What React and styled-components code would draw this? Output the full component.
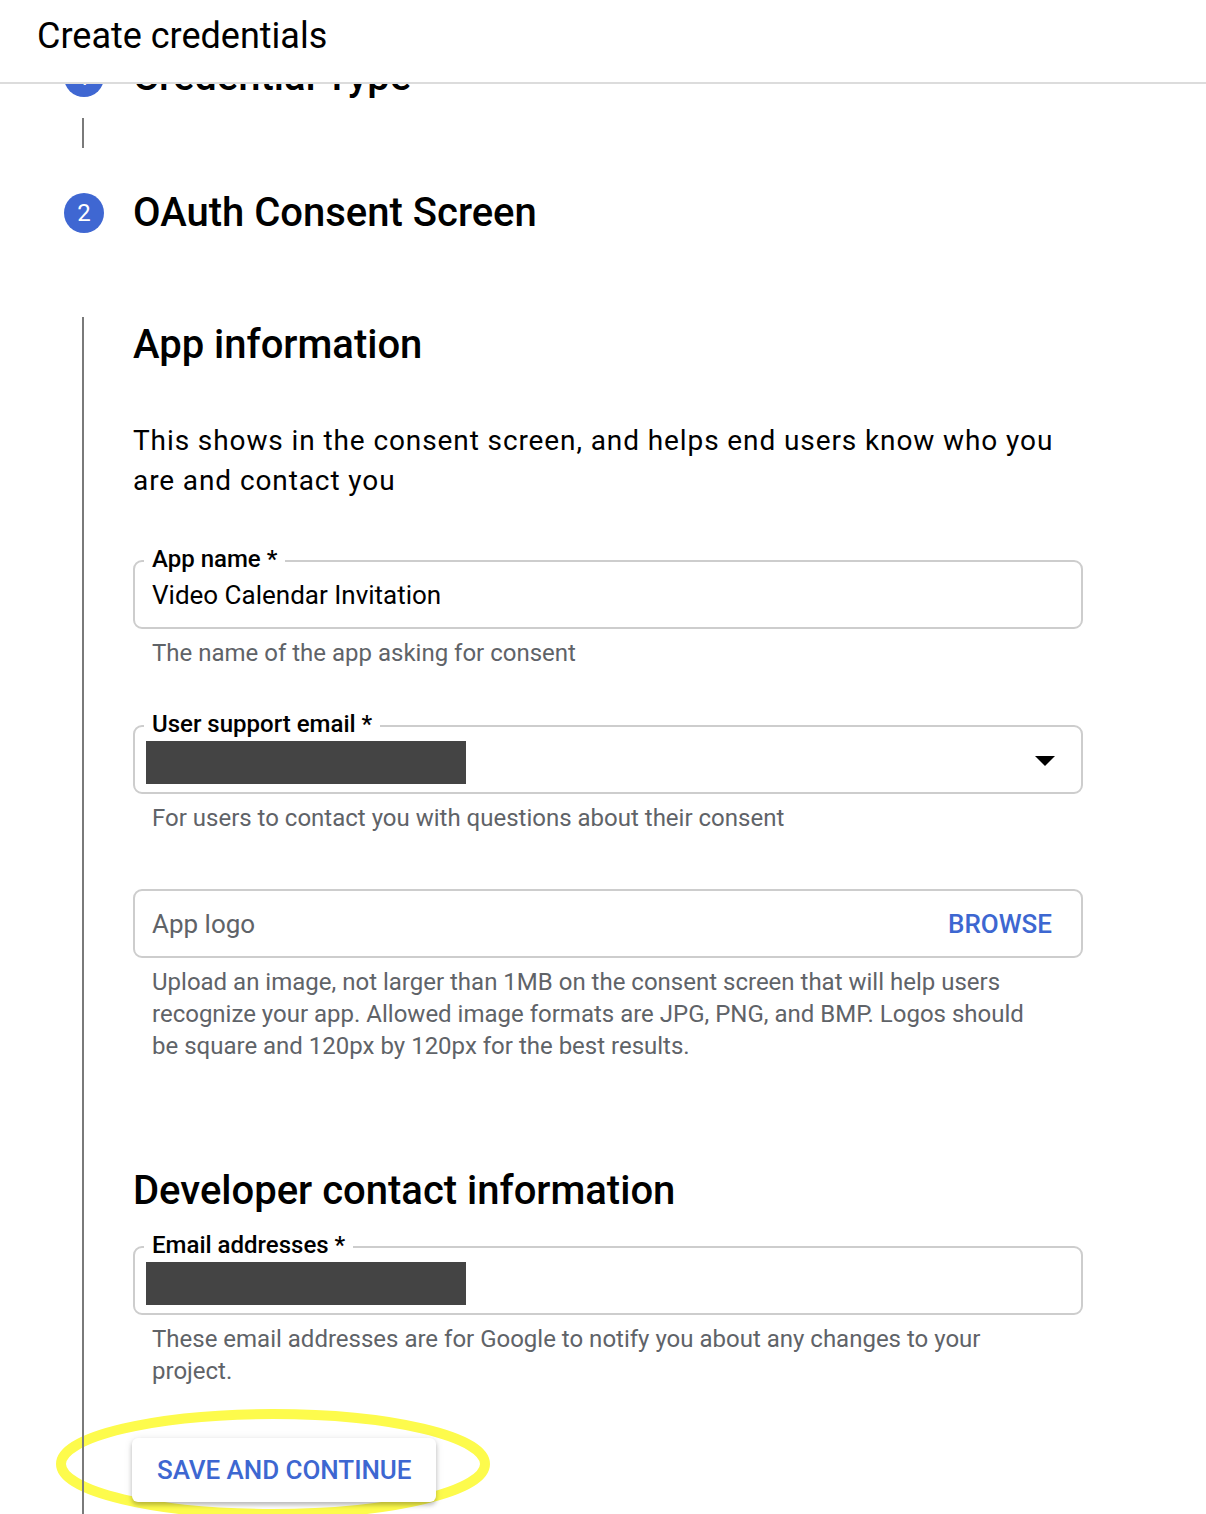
import React from "react";
import styled, { createGlobalStyle } from "styled-components";

const GlobalStyle = createGlobalStyle`
  html, body {
    margin: 0;
    padding: 0;
    background: #fff;
    font-family: Roboto, "Noto Sans", "Liberation Sans", sans-serif;
    color: #000;
  }
`;

const Page = styled.div`
  width: 1206px;
  height: 1514px;
  overflow: hidden;
  position: relative;
`;

const Header = styled.header`
  position: sticky;
  top: 0;
  z-index: 5;
  height: 84px;
  background: #fff;
  border-bottom: 2px solid #dcdcdc;
  display: flex;
  align-items: center;
  padding-left: 37px;
  padding-bottom: 11px;
  box-sizing: border-box;
  font-size: 36px;
  font-weight: 400;
`;

const Stepper = styled.div`
  margin-top: -27px;
  padding-left: 64px;
`;

const StepRow = styled.div`
  display: flex;
  align-items: center;
  gap: 29px;
  height: 40px;
`;

const Bubble = styled.div`
  width: 40px;
  height: 40px;
  border-radius: 50%;
  background: #3f67d2;
  color: #fff;
  font-size: 24px;
  display: flex;
  align-items: center;
  justify-content: center;
  flex-shrink: 0;
`;

const StepTitle = styled.h2`
  margin: 0;
  font-size: 40px;
  line-height: 40px;
  font-weight: 500;
`;

const Connector = styled.div`
  width: 2px;
  height: 30px;
  margin: 21px 0 45px 18px;
  background: #7a7a7a;
`;

const StepBody = styled.div`
  display: flex;
  gap: 29px;
  margin-top: 84px;
`;

const Rail = styled.div`
  width: 40px;
  flex-shrink: 0;
  display: flex;
  justify-content: center;
  position: relative;
  z-index: 3;

  &::before {
    content: "";
    display: block;
    width: 2px;
    height: 1400px;
    margin-left: -2px;
    background: #7a7a7a;
  }
`;

const Content = styled.div`
  width: 950px;
  padding-top: 4px;
`;

const Heading = styled.h3`
  margin: 0;
  font-size: 40px;
  line-height: 48px;
  font-weight: 500;
  margin-top: ${(p) => p.$top || 0}px;
`;

const Intro = styled.p`
  margin: 52px 0 0;
  font-size: 28px;
  line-height: 40px;
  letter-spacing: 0.9px;
`;

const Field = styled.div`
  position: relative;
  height: 69px;
  box-sizing: border-box;
  border: 2px solid #cdcdcd;
  border-radius: 9px;
  display: flex;
  align-items: center;
  padding: 0 26px 0 17px;
  margin-top: ${(p) => p.$top}px;
`;

const Label = styled.span`
  position: absolute;
  left: 9px;
  top: -15px;
  padding: 0 8px;
  background: #fff;
  font-size: 24px;
  line-height: 24px;
  font-weight: 500;
`;

const Value = styled.span`
  font-size: 26px;
  color: ${(p) => (p.$muted ? "#5f6368" : "#000")};
  flex: 1;
`;

const Redacted = styled.div`
  width: 320px;
  height: 43px;
  background: #444;
  margin: ${(p) => p.$top}px 0 0 -6px;
`;

const Spacer = styled.div`
  flex: 1;
`;

const Caret = styled.div`
  width: 0;
  height: 0;
  border-left: 10px solid transparent;
  border-right: 10px solid transparent;
  border-top: 10px solid #000;
  margin-top: 2px;
`;

const Browse = styled.span`
  color: #3d67d1;
  font-size: 26px;
  font-weight: 500;
  margin-right: 3px;
`;

const Helper = styled.p`
  margin: 8px 0 0;
  padding: 0 42px 0 19px;
  font-size: 24px;
  line-height: 32px;
  color: #5f6368;
`;

const ButtonWrap = styled.div`
  position: relative;
  margin-top: 51px;
  margin-left: -1px;
`;

const SaveButton = styled.button`
  position: relative;
  z-index: 2;
  height: 64px;
  padding: 0 25px;
  border: none;
  border-radius: 6px;
  background: #fff;
  color: #3d67d1;
  font-family: inherit;
  font-size: 26px;
  font-weight: 500;
  letter-spacing: -0.05px;
  box-shadow: 0 3px 4px rgba(0, 0, 0, 0.22), 0 1px 8px rgba(0, 0, 0, 0.1);
`;

const Highlight = styled.svg`
  position: absolute;
  left: -80px;
  top: -34px;
  z-index: 1;
  pointer-events: none;
`;

export default function App() {
  return (
    <Page>
      <GlobalStyle />
      <Header>Create credentials</Header>
      <Stepper>
        <StepRow>
          <Bubble>1</Bubble>
          <StepTitle>Credential Type</StepTitle>
        </StepRow>
        <Connector />
        <StepRow>
          <Bubble>2</Bubble>
          <StepTitle>OAuth Consent Screen</StepTitle>
        </StepRow>
        <StepBody>
          <Rail />
          <Content>
            <Heading>App information</Heading>
            <Intro>
              This shows in the consent screen, and helps end users know who you
              are and contact you
            </Intro>

            <Field $top={59}>
              <Label>App name *</Label>
              <Value>Video Calendar Invitation</Value>
            </Field>
            <Helper>The name of the app asking for consent</Helper>

            <Field $top={56}>
              <Label>User support email *</Label>
              <Redacted $top={6} />
              <Spacer />
              <Caret />
            </Field>
            <Helper>For users to contact you with questions about their consent</Helper>

            <Field $top={55}>
              <Value $muted>App logo</Value>
              <Browse>BROWSE</Browse>
            </Field>
            <Helper>
              Upload an image, not larger than 1MB on the consent screen that will
              help users recognize your app. Allowed image formats are JPG, PNG, and
              BMP. Logos should be square and 120px by 120px for the best results.
            </Helper>

            <Heading $top={105}>Developer contact information</Heading>
            <Field $top={31}>
              <Label>Email addresses *</Label>
              <Redacted $top={6} />
            </Field>
            <Helper>
              These email addresses are for Google to notify you about any changes to
              your project.
            </Helper>

            <ButtonWrap>
              <SaveButton>SAVE AND CONTINUE</SaveButton>
              <Highlight width="450" height="120" viewBox="0 0 450 120">
                <ellipse
                  cx="221"
                  cy="60"
                  rx="212"
                  ry="50"
                  fill="none"
                  stroke="#fdfb4c"
                  strokeWidth="10"
                />
              </Highlight>
            </ButtonWrap>
          </Content>
        </StepBody>
      </Stepper>
    </Page>
  );
}
